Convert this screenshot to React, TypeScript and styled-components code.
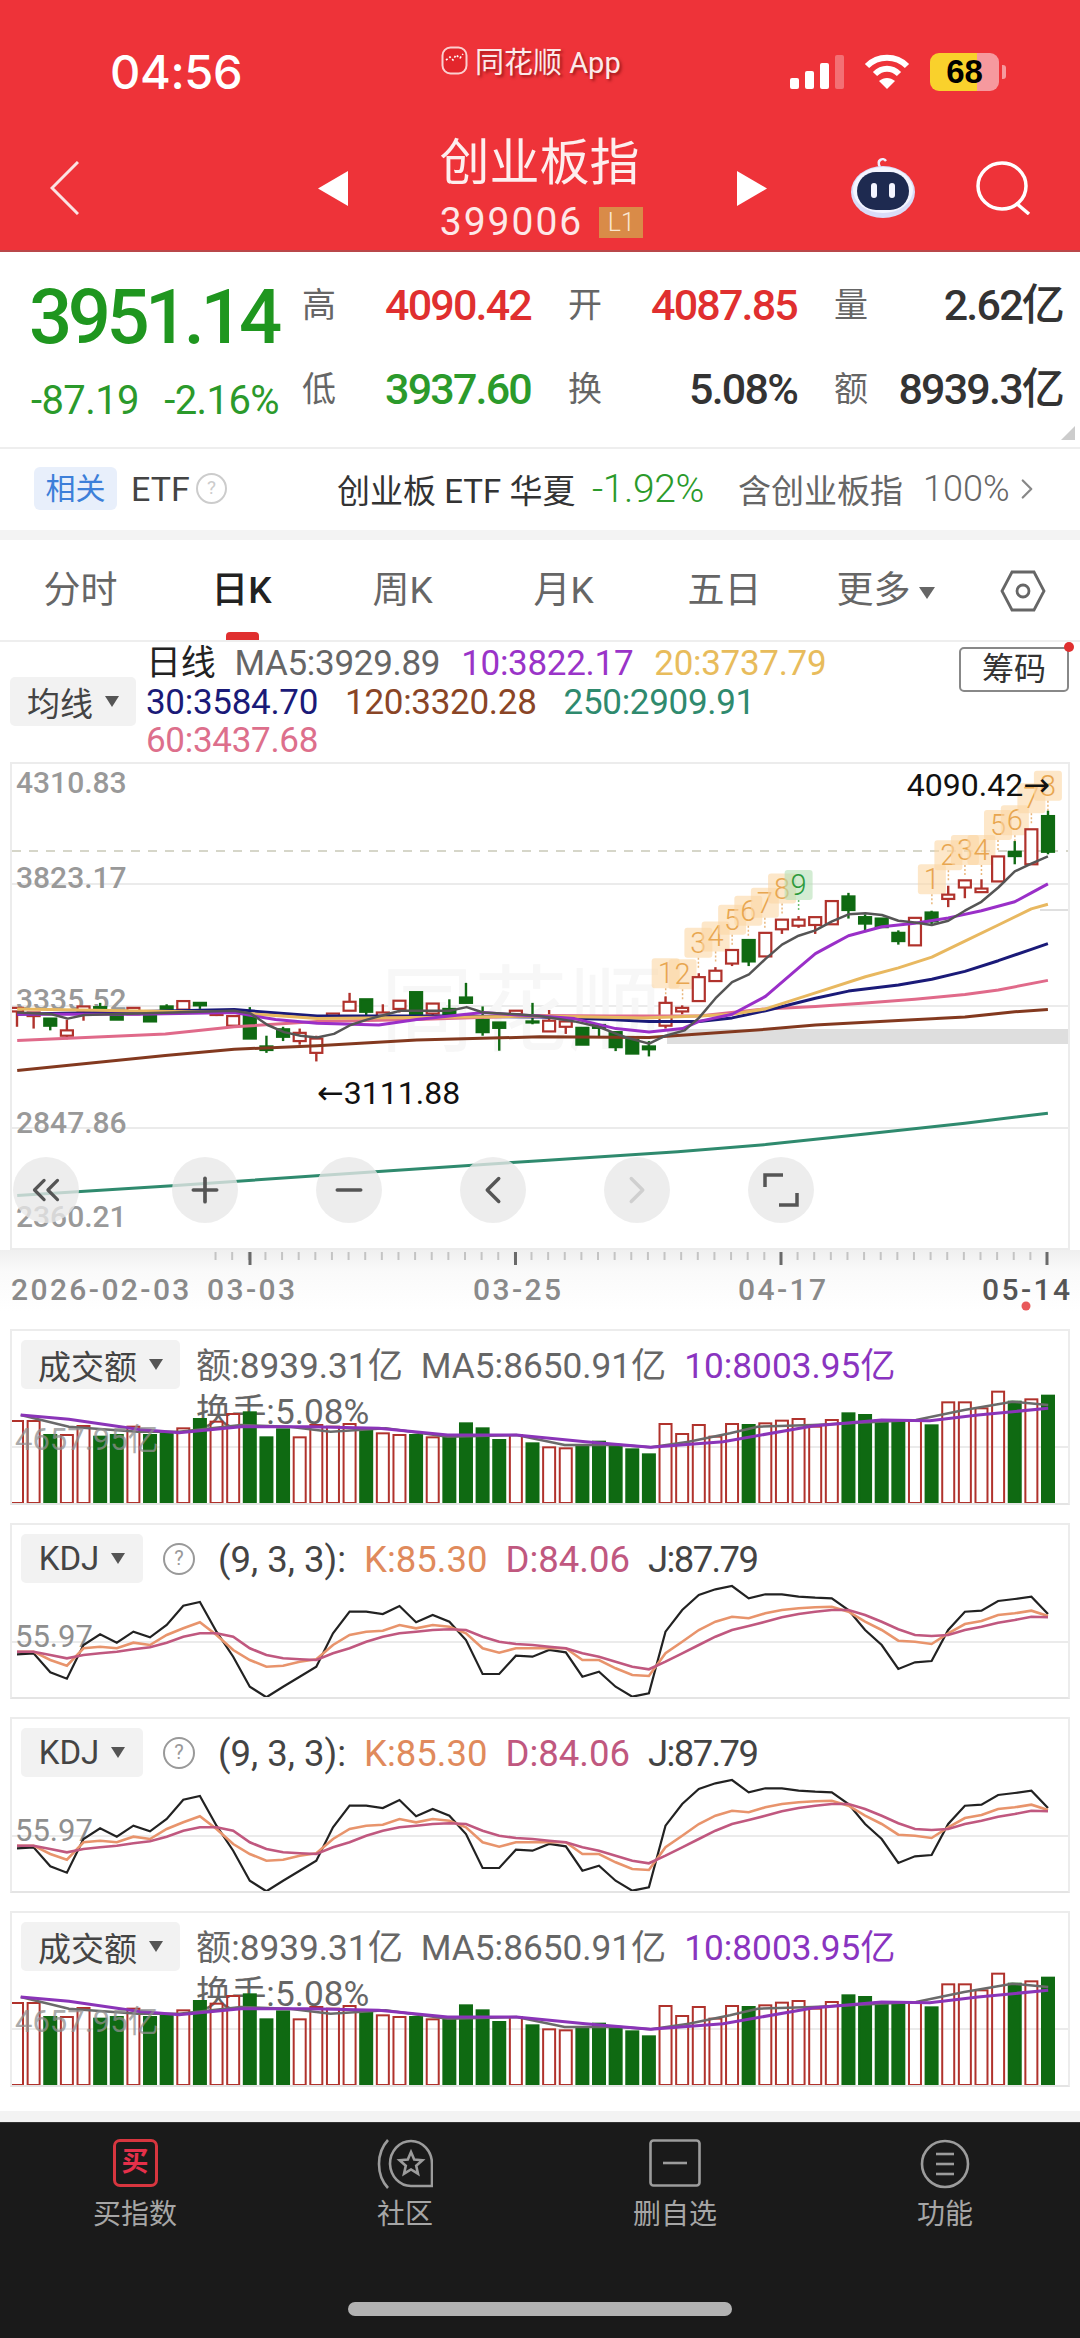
import React from 'react';
import styled, { createGlobalStyle } from 'styled-components';
import { ChevronLeft, ChevronRight, ChevronsLeft, Minus, Plus } from 'lucide-react';

const FONT = `Roboto, "Noto Sans CJK SC", sans-serif`;
const RED = '#e02f2f';
const GREEN = '#2b9a2b';
const BAR_RED = '#b0322c';
const BAR_GREEN = '#0f6a12';

const GlobalStyle = createGlobalStyle`
  html, body { margin: 0; padding: 0; background: #fff; }
  * { box-sizing: border-box; }
`;

const Page = styled.div`
  width: 1080px;
  height: 2338px;
  display: flex;
  flex-direction: column;
  overflow: hidden;
  background: #fff;
  font-family: ${FONT};
`;

/* ---------- red header ---------- */
const Header = styled.header`
  height: 252px;
  background: #ee3339;
  border-bottom: 2px solid #b9474a;
  color: #fff;
  flex: none;
`;

const StatusBar = styled.div`
  height: 118px;
  display: grid;
  grid-template-columns: 441px 349px 1fr;
  padding-top: 44px;
  align-items: start;
`;

const Clock = styled.div`
  padding-left: 110px;
  font: 500 47px/56px Inter, sans-serif;
  letter-spacing: -0.4px;
`;

const AppMark = styled.div`
  display: flex;
  align-items: center;
  gap: 7px;
  height: 32px;
  font-size: 29px;
  color: #fbeaea;
  text-shadow: 2px 2px 3px rgba(90, 0, 0, 0.55);
`;

const StatusIcons = styled.div`
  display: flex;
  align-items: center;
  height: 56px;
  gap: 20px;
`;

const Battery = styled.div<{ $level: number }>`
  width: 69px;
  height: 38px;
  border-radius: 9px;
  display: flex;
  align-items: center;
  justify-content: center;
  font: 700 33px/38px "Liberation Sans", sans-serif;
  color: #000;
  background: linear-gradient(90deg, #f9d12c ${p => p.$level}%, #f6999e ${p => p.$level}%);
  position: relative;
  &::after {
    content: '';
    position: absolute;
    right: -7px;
    top: 12px;
    width: 4px;
    height: 14px;
    border-radius: 0 3px 3px 0;
    background: #f6999e;
  }
`;

const NavRow = styled.div`
  display: flex;
  align-items: center;
  height: 132px;
  padding: 8px 0 0 50px;
`;

const BackButton = styled.div`
  width: 29px;
  margin-right: 239px;
  display: flex;
`;

const TitleBlock = styled.div`
  width: 389px;
  display: flex;
  flex-direction: column;
  align-items: center;
  padding-right: 2px;
`;

const Title = styled.div`
  font-size: 50px;
  line-height: 50px;
  font-weight: 400;
  color: #fdeeee;
  margin-right: 4px;
`;

const CodeRow = styled.div`
  display: flex;
  align-items: center;
  gap: 16px;
  margin-top: 18px;
  height: 32px;
`;

const Code = styled.span`
  font-size: 39px;
  font-weight: 400;
  letter-spacing: 2px;
  color: #fde8e8;
`;

const Level = styled.span`
  width: 44px;
  height: 31px;
  background: #d98b48;
  color: #fbe7d2;
  font-size: 25px;
  font-weight: 300;
  line-height: 31px;
  text-align: center;
`;

const RobotSlot = styled.div`
  margin-left: 83px;
  display: flex;
`;

const SearchSlot = styled.div`
  margin-left: 59px;
  display: flex;
`;

/* ---------- quote block ---------- */
const Quote = styled.section`
  height: 197px;
  flex: none;
  position: relative;
  border-bottom: 2px solid #eee;
  display: flex;
  padding: 23px 0 0 31px;
`;

const PriceCol = styled.div`
  width: 271px;
  flex: none;
`;

const Price = styled.div`
  font-size: 76px;
  font-weight: 500;
  line-height: 84px;
  letter-spacing: -4.5px;
  margin-left: -2px;
  color: #1f961f;
`;

const Change = styled.div`
  display: flex;
  justify-content: space-between;
  width: 248px;
  margin-top: 20px;
  font-size: 40px;
  line-height: 44px;
  letter-spacing: -0.6px;
  color: ${GREEN};
`;

const StatsGrid = styled.div`
  display: grid;
  grid-template-columns: repeat(3, 229px);
  grid-auto-rows: 44px;
  column-gap: 37px;
  row-gap: 40px;
  padding-top: 8px;
`;

const Stat = styled.div`
  display: flex;
  justify-content: space-between;
  align-items: center;
  height: 44px;
`;

const StatLabel = styled.span`
  font-size: 34px;
  line-height: 44px;
  color: #666;
`;

const StatValue = styled.span<{ $color: string }>`
  font-size: 43px;
  line-height: 44px;
  font-weight: 500;
  letter-spacing: -1.8px;
  color: ${p => p.$color};
`;

const Corner = styled.div`
  position: absolute;
  right: 5px;
  bottom: 7px;
  width: 0;
  height: 0;
  border-left: 14px solid transparent;
  border-bottom: 14px solid #ccc;
`;

/* ---------- related ETF row ---------- */
const RelatedRow = styled.div`
  height: 81px;
  flex: none;
  display: flex;
  align-items: center;
  padding: 0 0 2px 34px;
  font-size: 32px;
  color: #444;
`;

const RelatedBadge = styled.span`
  width: 83px;
  height: 43px;
  border-radius: 6px;
  background: #e8effb;
  color: #3d7fd9;
  font-size: 30px;
  line-height: 43px;
  text-align: center;
`;

const EtfLabel = styled.span`
  margin-left: 14px;
  font-size: 34px;
  width: 65px;
`;

const HelpDot = styled.span<{ $size: number; $color: string }>`
  width: ${p => p.$size}px;
  height: ${p => p.$size}px;
  flex: none;
  border-radius: 50%;
  border: 2.5px solid ${p => p.$color};
  color: ${p => p.$color};
  font-size: ${p => p.$size - 12}px;
  line-height: ${p => p.$size - 5}px;
  text-align: center;
`;

const FundName = styled.span`
  margin-left: 110px;
  width: 255px;
  font-size: 33px;
  color: #333;
`;

const FundChange = styled.span`
  width: 146px;
  font-size: 39px;
  font-weight: 300;
  letter-spacing: -0.4px;
  color: ${GREEN};
`;

const FundHold = styled.span`
  font-size: 33px;
  color: #666;
`;

const FundRatio = styled.span`
  margin-left: 20px;
  font-size: 36px;
  font-weight: 300;
  color: #666;
`;

const Band = styled.div<{ $h: number }>`
  height: ${p => p.$h}px;
  flex: none;
  background: #f3f3f3;
`;

/* ---------- period tabs ---------- */
const Tabs = styled.nav`
  height: 102px;
  flex: none;
  display: grid;
  grid-template-columns: repeat(6, 161px) 1fr;
  align-items: center;
  border-bottom: 2px solid #eee;
  padding-top: 2px;
  position: relative;
`;

const Tab = styled.div<{ $active?: boolean }>`
  text-align: center;
  font-size: 37px;
  line-height: 40px;
  font-weight: ${p => (p.$active ? 500 : 400)};
  color: ${p => (p.$active ? '#222' : '#666')};
  position: relative;
  &::after {
    content: '';
    display: ${p => (p.$active ? 'block' : 'none')};
    position: absolute;
    left: 65px;
    bottom: -29px;
    width: 33px;
    height: 8px;
    border-radius: 4px 4px 0 0;
    background: ${RED};
  }
`;

const MoreCaret = styled.span`
  display: inline-block;
  margin-left: 8px;
  vertical-align: middle;
  border-left: 8px solid transparent;
  border-right: 8px solid transparent;
  border-top: 12px solid #666;
`;

const SettingsSlot = styled.div`
  display: flex;
  justify-content: center;
`;

/* ---------- main chart head ---------- */
const ChartHead = styled.div`
  height: 120px;
  flex: none;
  display: flex;
  padding: 3px 11px 0 10px;
  position: relative;
`;

const SelectButton = styled.div<{ $w: number }>`
  width: ${p => p.$w}px;
  height: 49px;
  flex: none;
  border-radius: 5px;
  background: #f2f2f2;
  display: flex;
  align-items: center;
  justify-content: center;
  gap: 12px;
  font-size: 33px;
  color: #444;
  &::after {
    content: '';
    border-left: 7px solid transparent;
    border-right: 7px solid transparent;
    border-top: 11px solid #555;
  }
`;

const MaButton = styled(SelectButton)`
  margin-top: 32px;
`;

const MaLegend = styled.div`
  margin-left: 10px;
  display: flex;
  flex-direction: column;
`;

const LegendLine = styled.div<{ $gap: number }>`
  display: flex;
  gap: ${p => p.$gap}px;
  height: 38.5px;
  line-height: 38px;
  font-size: 35px;
  letter-spacing: -0.3px;
  white-space: nowrap;
`;

const LegendItem = styled.span<{ $color: string }>`
  color: ${p => p.$color};
`;

const DayLabel = styled.span`
  color: #222;
  margin-right: -2px;
`;

const ChipButton = styled.div`
  margin-left: auto;
  margin-top: 2px;
  width: 110px;
  height: 45px;
  border: 2px solid #888;
  border-radius: 5px;
  text-align: center;
  font-size: 32px;
  line-height: 40px;
  color: #333;
  position: relative;
  &::after {
    content: '';
    position: absolute;
    top: -7px;
    right: -7px;
    width: 10px;
    height: 10px;
    border-radius: 50%;
    background: ${RED};
  }
`;

/* ---------- main chart ---------- */
const ChartBox = styled.div`
  height: 488px;
  flex: none;
  margin: 0 10px;
  border: 2px solid #ececec;
  position: relative;
`;

const FullSvg = styled.svg`
  position: absolute;
  inset: 0;
  width: 100%;
  height: 100%;
  display: block;
`;

const ToolRow = styled.div`
  position: absolute;
  left: 1px;
  top: 393px;
  display: flex;
  gap: 78px;
`;

const ToolButton = styled.div<{ $first?: boolean; $off?: boolean }>`
  width: 66px;
  height: 66px;
  border-radius: 50%;
  background: rgba(232, 232, 232, 0.78);
  display: flex;
  align-items: center;
  justify-content: center;
  color: ${p => (p.$off ? '#cfcfcf' : '#555')};
  margin-right: ${p => (p.$first ? '15px' : '0')};
`;

const AxisLabel = styled.text`
  font: 500 30px Roboto, sans-serif;
  fill: #999;
`;

const PeakLabel = styled.text<{ $end?: boolean }>`
  font: 400 32px Roboto, "DejaVu Sans", sans-serif;
  fill: #111;
  text-anchor: ${p => (p.$end ? 'end' : 'start')};
`;

const Watermark = styled.text`
  font: 400 94px "Noto Sans CJK SC", sans-serif;
  fill: #f7f7f7;
`;

const SeqMark = styled.text<{ $hit?: boolean }>`
  font: 300 29px Roboto, sans-serif;
  fill: ${p => (p.$hit ? '#2c9a3c' : '#e8a650')};
  text-anchor: middle;
`;

const TimeAxis = styled.div`
  height: 61px;
  flex: none;
  position: relative;
  background: linear-gradient(180deg, #efefef 0, #fafafa 35%, #fff 100%);
`;

const DateLabel = styled.text<{ $strong?: boolean }>`
  font: 500 30px Roboto, sans-serif;
  letter-spacing: 2.4px;
  fill: ${p => (p.$strong ? '#555' : '#8a8a8a')};
`;

/* ---------- indicator panels ---------- */
const Panel = styled.section`
  height: 176px;
  flex: none;
  margin: 18px 10px 0;
  border: 2px solid #ececec;
  border-bottom-color: #e4e4e4;
  position: relative;
  padding: 9px 0 0 9px;
  display: flex;
  gap: 16px;
`;

const PanelLegend = styled.div`
  display: flex;
  flex-direction: column;
`;

const PanelLine = styled.div`
  display: flex;
  gap: 18px;
  height: 52px;
  padding-top: 5px;
  line-height: 42px;
  font-size: 35.2px;
  white-space: nowrap;
  color: #666;
  &:nth-child(2) {
    height: 42px;
    margin-top: -6px;
  }
`;

const KdjLegend = styled.div`
  display: flex;
  align-items: center;
  gap: 18px;
  height: 49px;
  margin-left: 7px;
  padding-top: 2px;
  font-size: 36.5px;
  color: #444;
  white-space: nowrap;
`;

const KdjJ = styled.span`
  letter-spacing: -1.6px;
`;

const HelpSlot = styled.div`
  margin-left: 4px;
  height: 49px;
  display: flex;
  align-items: center;
`;

const PanelAxis = styled.text`
  font: 400 31px Roboto, "Noto Sans CJK SC", sans-serif;
  fill: #8f8f8f;
`;

const Footer = styled.div`
  height: 24px;
  flex: none;
`;

/* ---------- bottom nav ---------- */
const BottomNav = styled.footer`
  flex: 1;
  background: #1a1a1a;
  display: flex;
  flex-direction: column;
  border-top: 1px solid #333;
`;

const NavGrid = styled.div`
  display: grid;
  grid-template-columns: repeat(4, 270px);
  padding-top: 16px;
`;

const NavItem = styled.div`
  display: flex;
  flex-direction: column;
  align-items: center;
  color: #a6a6a6;
  font-size: 28px;
  line-height: 30px;
`;

const NavIconSlot = styled.div`
  height: 48px;
  margin-bottom: 13px;
  display: flex;
  justify-content: center;
`;

const BuyIcon = styled.div`
  width: 45px;
  height: 48px;
  border: 3px solid #d8363f;
  border-radius: 7px;
  color: #e6304a;
  font-size: 27px;
  font-weight: 700;
  line-height: 41px;
  text-align: center;
`;

const HomeBar = styled.div`
  width: 384px;
  height: 14px;
  border-radius: 7px;
  background: #b2b2b2;
  margin: auto auto 22px;
`;

/* ---------- data, read off the chart: [kind, bodyTop, bodyBottom, wickTop, wickBottom] ---------- */
type Candle = ['r' | 'g', number, number, number?, number?];

const CANDLES: Candle[] = [
  ['r', 722, 732, 722, 775], ['r', 735, 745, 735, 780], ['g', 752, 772, 752, 785], ['r', 785, 800, 755, 810],
  ['r', 718, 730, 718, 758], ['g', 720, 730, 708, 730], ['g', 740, 755], ['r', 722, 740],
  ['g', 745, 760], ['g', 718, 730, 712, 730], ['r', 703, 727], ['g', 708, 715, 708, 725],
  ['r', 738, 742, 738, 745], ['r', 745, 772], ['g', 745, 808, 720, 808], ['g', 830, 840, 800, 848],
  ['g', 782, 803, 775, 815], ['r', 792, 815, 780, 825], ['r', 808, 848, 800, 872], ['r', 738, 748],
  ['r', 705, 730, 680, 730], ['g', 698, 733, 698, 745], ['r', 735, 745, 712, 745], ['r', 702, 725, 702, 735],
  ['g', 678, 742], ['r', 710, 738, 710, 745], ['g', 725, 740, 698, 740], ['g', 693, 708, 652, 708],
  ['g', 755, 790, 718, 800], ['g', 763, 778, 763, 842], ['r', 730, 740], ['g', 760, 763, 708, 768],
  ['r', 758, 788, 728, 788], ['r', 760, 775, 760, 795], ['g', 778, 825], ['g', 770, 778, 770, 805],
  ['g', 790, 832, 790, 843], ['g', 812, 850], ['g', 830, 838, 815, 858], ['r', 708, 772, 690, 780],
  ['r', 722, 732, 715, 740], ['r', 636, 703, 625, 703], ['r', 618, 647, 608, 647], ['r', 560, 598, 560, 605],
  ['g', 532, 592, 532, 605], ['r', 512, 578], ['r', 475, 502, 475, 515], ['r', 475, 492, 465, 498],
  ['r', 468, 490, 468, 515], ['r', 423, 488], ['g', 410, 448, 400, 472], ['g', 468, 486, 460, 510],
  ['g', 472, 496], ['g', 512, 535, 505, 545], ['r', 470, 547], ['g', 455, 480, 450, 490],
  ['r', 405, 417, 380, 440], ['r', 365, 385, 365, 415], ['r', 388, 398, 362, 398], ['r', 298, 368],
  ['g', 285, 297, 255, 320], ['r', 222, 320], ['g', 185, 285, 170, 292],
];

const STEP = (1048 - 17) / 62;
const xOf = (i: number) => 17 + i * STEP;
const yOf = (v: number) => 750 + v / 2.8;
// line points are [x, y] on the 2.9x crop of the chart
const toPoints = (line: number[][]) => line.map(([x, y]) => `${(x / 2.904).toFixed(1)},${yOf(y).toFixed(1)}`).join(' ');

const MA_LINES: { color: string; width: number; line: number[][] }[] = [
  { color: '#2f8a6e', width: 3, line: [[50, 1247], [500, 1220], [1100, 1180], [1568, 1150], [1968, 1125], [2223, 1105], [2513, 1075], [2802, 1045], [3043, 1017]] },
  { color: '#83391f', width: 3, line: [[50, 897], [480, 855], [680, 838], [921, 828], [1210, 812], [1568, 803], [1885, 805], [2030, 795], [2223, 782], [2368, 770], [2609, 757], [2802, 748], [2947, 733], [3043, 727]] },
  { color: '#e06a8a', width: 3, line: [[50, 813], [480, 795], [680, 775], [921, 760], [1210, 755], [1568, 743], [1768, 745], [2030, 745], [2223, 725], [2368, 718], [2513, 708], [2657, 698], [2802, 685], [2899, 672], [3043, 645]] },
  { color: '#1a1a78', width: 3, line: [[50, 740], [680, 727], [921, 745], [1306, 745], [1568, 748], [1768, 755], [1885, 760], [2030, 760], [2126, 750], [2223, 730], [2368, 695], [2464, 675], [2609, 658], [2706, 642], [2802, 620], [2899, 590], [2995, 558], [3043, 542]] },
  { color: '#e8b860', width: 3, line: [[50, 725], [680, 735], [921, 752], [1568, 745], [1868, 750], [2030, 745], [2126, 740], [2223, 725], [2368, 680], [2513, 635], [2609, 610], [2706, 580], [2802, 535], [2899, 490], [2995, 445], [3043, 432]] },
  { color: '#9a2fc8', width: 3, line: [[50, 740], [400, 740], [680, 735], [800, 755], [921, 765], [1100, 770], [1210, 755], [1306, 745], [1403, 735], [1500, 742], [1568, 745], [1668, 752], [1788, 780], [1885, 790], [1982, 780], [2030, 760], [2126, 740], [2223, 690], [2319, 610], [2368, 570], [2416, 545], [2464, 520], [2561, 495], [2657, 485], [2754, 470], [2850, 450], [2947, 425], [2995, 400], [3043, 375]] },
  { color: '#555', width: 2.5, line: [[50, 735], [150, 740], [197, 752], [245, 742], [680, 730], [728, 738], [777, 770], [825, 790], [873, 800], [921, 805], [970, 795], [1018, 770], [1066, 755], [1162, 730], [1306, 730], [1355, 720], [1403, 735], [1500, 740], [1568, 745], [1668, 760], [1738, 775], [1818, 805], [1885, 822], [1933, 800], [1988, 785], [2030, 750], [2078, 695], [2126, 650], [2175, 628], [2223, 585], [2271, 545], [2319, 520], [2368, 505], [2416, 480], [2464, 460], [2513, 457], [2561, 462], [2609, 478], [2657, 483], [2706, 490], [2754, 478], [2802, 450], [2850, 425], [2899, 385], [2947, 340], [2995, 318], [3043, 298]] },
];

const MARKS: [string, number, number][] = [
  ['1', 365, 625], ['2', 414, 628], ['3', 460, 540], ['4', 510, 522], ['5', 558, 475], ['6', 605, 450], ['7', 653, 428], ['8', 703, 388], ['9', 751, 378],
  ['1', 1138, 362], ['2', 1186, 295], ['3', 1234, 280], ['4', 1282, 280], ['5', 1330, 210], ['6', 1379, 197], ['7', 1427, 135], ['8', 1475, 100],
];

const VOLUME: ['r' | 'g', number][] = [
  ['r', 303], ['r', 303], ['g', 345], ['r', 345], ['r', 318], ['g', 350], ['g', 345], ['r', 320], ['g', 345], ['g', 340],
  ['r', 325], ['g', 297], ['r', 305], ['r', 282], ['g', 277], ['g', 352], ['g', 328], ['r', 352], ['r', 315], ['r', 320],
  ['r', 312], ['g', 325], ['r', 340], ['r', 345], ['g', 345], ['r', 352], ['g', 348], ['g', 310], ['g', 325], ['g', 360],
  ['r', 345], ['g', 370], ['r', 382], ['r', 385], ['g', 375], ['g', 365], ['g', 380], ['g', 388], ['g', 403], ['r', 312],
  ['r', 342], ['r', 315], ['r', 350], ['r', 312], ['g', 315], ['r', 310], ['r', 302], ['r', 297], ['r', 320], ['r', 300],
  ['g', 280], ['g', 285], ['g', 300], ['g', 300], ['r', 300], ['g', 316], ['r', 247], ['r', 247], ['r', 265], ['r', 215],
  ['g', 245], ['r', 238], ['g', 227],
];

const VOL_MA5 = [[30, 285], [100, 320], [200, 335], [260, 335], [350, 315], [420, 320], [480, 335], [560, 325], [650, 350], [750, 345], [820, 375], [900, 375], [945, 382], [1000, 365], [1060, 340], [1100, 320], [1180, 315], [1330, 300], [1400, 270], [1470, 245], [1522, 255]];
const VOL_MA10 = [[30, 285], [100, 298], [200, 328], [260, 338], [350, 320], [450, 320], [550, 325], [650, 345], [750, 345], [850, 365], [945, 382], [1050, 365], [1180, 318], [1280, 300], [1350, 302], [1420, 285], [1522, 265]];

const J_LINE = [1003, 1000, 1057, 1076, 975, 943, 968, 935, 952, 915, 857, 846, 935, 1010, 1100, 1132, 1100, 1070, 1040, 940, 875, 875, 882, 858, 907, 885, 905, 960, 1062, 1062, 1007, 1010, 990, 997, 1070, 1055, 1100, 1130, 1120, 935, 870, 825, 808, 798, 835, 823, 823, 830, 833, 835, 870, 930, 975, 1047, 1027, 1023, 930, 875, 872, 843, 837, 830, 882];
const K_LINE = [995, 995, 1020, 1037, 985, 980, 985, 968, 975, 945, 925, 907, 945, 990, 1020, 1040, 1037, 1025, 1018, 975, 945, 935, 932, 915, 925, 915, 920, 940, 985, 998, 985, 985, 985, 985, 1020, 1020, 1045, 1065, 1068, 1000, 965, 930, 905, 890, 895, 880, 870, 865, 862, 860, 875, 905, 930, 962, 965, 972, 940, 912, 903, 885, 880, 872, 888];
const D_LINE = [995, 995, 1005, 1015, 1005, 1000, 995, 988, 982, 968, 950, 940, 940, 950, 985, 1005, 1015, 1018, 1020, 1000, 985, 965, 950, 940, 935, 930, 928, 930, 950, 965, 972, 975, 980, 985, 1000, 1010, 1025, 1040, 1048, 1025, 1000, 975, 950, 930, 918, 905, 892, 882, 875, 870, 870, 885, 905, 928, 945, 948, 945, 930, 920, 908, 900, 890, 892];

/* ---------- small drawings ---------- */
const LogoIcon = () => (
  <svg width="27" height="29" viewBox="0 0 27 29">
    <rect x="1.5" y="1.5" width="24" height="26" rx="8" fill="#e3262c" stroke="#fbd0d0" strokeWidth="2" />
    <polyline points="5,14 9,11 12,14 15,9 19,12 22,8" fill="none" stroke="#fff" strokeWidth="1.6" strokeDasharray="2 2" />
  </svg>
);

const SignalIcon = () => (
  <svg width="54" height="34" viewBox="0 0 54 34">
    <rect x="0" y="23" width="9" height="11" rx="2" fill="#fff" />
    <rect x="15" y="16" width="9" height="18" rx="2" fill="#fff" />
    <rect x="30" y="8" width="9" height="26" rx="2" fill="#fff" />
    <rect x="45" y="0" width="9" height="34" rx="2" fill="#fff" fillOpacity="0.3" />
  </svg>
);

const WifiIcon = () => (
  <svg width="46" height="36" viewBox="0 0 46 36" fill="none" stroke="#fff" strokeWidth="6">
    <path d="M3 12 C14 1 32 1 43 12" />
    <path d="M11 20 C18 13 28 13 35 20" />
    <path d="M23 35 L15 27 C20 23 26 23 31 27 Z" fill="#fff" stroke="none" />
  </svg>
);

const BackIcon = () => (
  <svg width="29" height="54" viewBox="0 0 29 54" fill="none" stroke="#fbe3e3" strokeWidth="3">
    <polyline points="28,1 2,27 28,53" />
  </svg>
);

const Arrow = ({ dir }: { dir: 'l' | 'r' }) => (
  <svg width="30" height="35" viewBox="0 0 30 35">
    <polygon points={dir === 'l' ? '30,0 30,35 0,17.5' : '0,0 0,35 30,17.5'} fill="#fff" />
  </svg>
);

const RobotIcon = () => (
  <svg width="66" height="62" viewBox="0 0 66 62">
    <path d="M30 10 C26 3 33 0 36 4" fill="none" stroke="#eef0ff" strokeWidth="2.5" />
    <ellipse cx="33" cy="35" rx="32" ry="26" fill="#d9dcf8" />
    <ellipse cx="33" cy="33" rx="30" ry="23" fill="#f4f5ff" />
    <rect x="7" y="15" width="52" height="38" rx="19" fill="#1e2a50" />
    <rect x="21" y="26" width="6" height="15" rx="3" fill="#f4f5ff" />
    <rect x="39" y="26" width="6" height="15" rx="3" fill="#f4f5ff" />
  </svg>
);

const SearchIcon = () => (
  <svg width="56" height="54" viewBox="0 0 56 54" fill="none" stroke="#fff" strokeWidth="3.5">
    <ellipse cx="27" cy="25" rx="24" ry="23" />
    <line x1="41" y1="42" x2="54" y2="53" />
  </svg>
);

const HexIcon = () => (
  <svg width="46" height="42" viewBox="0 0 46 42" fill="none" stroke="#666" strokeWidth="2.8">
    <polygon points="12,2 34,2 44,21 34,40 12,40 2,21" />
    <circle cx="23" cy="21" r="6" />
  </svg>
);

const FullscreenIcon = () => (
  <svg width="36" height="34" viewBox="0 0 36 34" fill="none" stroke="#555" strokeWidth="3.5">
    <polyline points="2,14 2,2 20,2" />
    <polyline points="34,20 34,32 16,32" />
  </svg>
);

const CommunityIcon = () => (
  <svg width="56" height="50" viewBox="0 0 56 50" fill="none" stroke="#9c9c9c" strokeWidth="2.6">
    <path d="M11 1 C-1 14 -1 36 11 49" />
    <path d="M13 25 a21 23 0 0 1 42 0 v22 h-21 a21 23 0 0 1 -21 -22 z" />
    <polygon points="34,13 37.2,20.5 45.4,21.3 39.2,26.7 41,34.7 34,30.5 27,34.7 28.8,26.7 22.6,21.3 30.8,20.5" />
  </svg>
);

const WatchlistIcon = () => (
  <svg width="52" height="48" viewBox="0 0 52 48" fill="none" stroke="#9c9c9c" strokeWidth="2.6">
    <rect x="1.5" y="1.5" width="49" height="45" rx="3" />
    <line x1="14" y1="24" x2="38" y2="24" />
  </svg>
);

const MenuIcon = () => (
  <svg width="50" height="50" viewBox="0 0 50 50" fill="none" stroke="#9c9c9c" strokeWidth="2.6">
    <circle cx="25" cy="25" r="23" />
    <line x1="16" y1="15" x2="34" y2="15" />
    <line x1="16" y1="25" x2="34" y2="25" />
    <line x1="16" y1="35" x2="34" y2="35" />
  </svg>
);

/* ---------- charts ---------- */
const MainChart = () => (
  <FullSvg viewBox="12 764 1056 484">
    <line x1="12" x2="1068" y1="884" y2="884" stroke="#e4e4e4" strokeWidth="1.5" />
    <line x1="12" x2="1068" y1="1006" y2="1006" stroke="#e4e4e4" strokeWidth="1.5" />
    <line x1="12" x2="1068" y1="1128" y2="1128" stroke="#e4e4e4" strokeWidth="1.5" />
    <line x1="1040" x2="1068" y1="910" y2="910" stroke="#d5d5d5" strokeWidth="1.5" />
    <rect x="667" y="1029" width="401" height="15" fill="#dedede" />
    <line x1="12" x2="1068" y1="851" y2="851" stroke="#c9c9b8" strokeWidth="1.5" strokeDasharray="9 8" />
    <Watermark x="380" y="1044">同花顺</Watermark>
    <AxisLabel x="16" y="793">4310.83</AxisLabel>
    <AxisLabel x="16" y="888">3823.17</AxisLabel>
    <AxisLabel x="16" y="1010">3335.52</AxisLabel>
    <AxisLabel x="16" y="1133">2847.86</AxisLabel>
    <AxisLabel x="16" y="1227">2360.21</AxisLabel>
    {MARKS.map(([num, px, py], i) => {
      const cx = 540 + px / 2.904;
      const cy = yOf(py);
      const hit = num === '9';
      return (
        <g key={i}>
          <rect x={cx - 14} y={cy - 15} width="28" height="30" rx="3" fill={hit ? '#b5dfb5' : '#fbd7a5'} fillOpacity="0.6" />
          <line x1={cx} x2={cx} y1={cy + 15} y2={cy + 25} stroke={hit ? '#6fbf6f' : '#e9b77c'} strokeWidth="1.5" strokeDasharray="2 2" />
          <SeqMark x={cx} y={cy + 10} $hit={hit}>{num}</SeqMark>
        </g>
      );
    })}
    {CANDLES.map(([kind, top, bottom, hi, lo], i) => {
      const x = xOf(i);
      const color = kind === 'r' ? BAR_RED : BAR_GREEN;
      return (
        <g key={i}>
          <line x1={x} x2={x} y1={yOf(hi ?? top)} y2={yOf(lo ?? bottom)} stroke={color} strokeWidth="2.4" />
          <rect
            x={x - 6}
            y={yOf(top)}
            width="12"
            height={yOf(bottom) - yOf(top)}
            fill={kind === 'r' ? '#fff' : color}
            stroke={color}
            strokeWidth="2.2"
          />
        </g>
      );
    })}
    {MA_LINES.map(ma => (
      <polyline key={ma.color} points={toPoints(ma.line)} fill="none" stroke={ma.color} strokeWidth={ma.width} strokeLinejoin="round" />
    ))}
    <PeakLabel x="317" y="1104">←3111.88</PeakLabel>
    <PeakLabel x="1050" y="796" $end>4090.42→</PeakLabel>
  </FullSvg>
);

const TICKS = Array.from({ length: 51 }, (_, i) => 1047 - i * STEP);
const MAJOR = [250, 515.5, 781, 1047];

const AxisDrawing = () => (
  <FullSvg viewBox="0 1250 1080 61">
    {TICKS.map((x, i) => (
      <line key={i} x1={x} x2={x} y1="1252" y2="1260" stroke="#c4c4c4" strokeWidth="2" />
    ))}
    {MAJOR.map(x => (
      <line key={x} x1={x} x2={x} y1="1252" y2="1265" stroke="#6a6a6a" strokeWidth="3" />
    ))}
    <DateLabel x="11" y="1300">2026-02-03</DateLabel>
    <DateLabel x="207" y="1300">03-03</DateLabel>
    <DateLabel x="473" y="1300">03-25</DateLabel>
    <DateLabel x="738" y="1300">04-17</DateLabel>
    <DateLabel x="982" y="1300" $strong>05-14</DateLabel>
    <circle cx="1026" cy="1306" r="4.5" fill="#e8585a" />
  </FullSvg>
);

// crop scale on this panel is 1.452 across, 3 down
const volPoints = (line: number[][]) => line.map(([x, y]) => `${(x / 1.452).toFixed(1)},${(1320 + y / 3).toFixed(1)}`).join(' ');

const VolumeDrawing = () => (
  <FullSvg viewBox="12 1331 1056 172">
    <line x1="12" x2="1068" y1="1447" y2="1447" stroke="#e4e4e4" strokeWidth="1.5" />
    {VOLUME.map(([kind, top], i) => {
      const y = 1320 + top / 3;
      const color = kind === 'r' ? BAR_RED : BAR_GREEN;
      return (
        <rect
          key={i}
          x={xOf(i) - 6}
          y={y}
          width="12"
          height={1503 - y}
          fill={kind === 'r' ? 'none' : color}
          stroke={color}
          strokeWidth="2"
        />
      );
    })}
    <polyline points={volPoints(VOL_MA5)} fill="none" stroke="#6a6a6a" strokeWidth="2.5" />
    <polyline points={volPoints(VOL_MA10)} fill="none" stroke="#8a34b8" strokeWidth="3" />
    <PanelAxis x="15" y="1450" opacity="0.75">4657.95亿</PanelAxis>
  </FullSvg>
);

const kdjPoints = (vals: number[]) => vals.map((v, i) => `${xOf(i).toFixed(1)},${(1320 + v / 3).toFixed(1)}`).join(' ');

const KdjDrawing = () => (
  <FullSvg viewBox="12 1525 1056 172">
    <line x1="12" x2="1068" y1="1642" y2="1642" stroke="#e4e4e4" strokeWidth="1.5" />
    <PanelAxis x="15" y="1647">55.97</PanelAxis>
    <polyline points={kdjPoints(J_LINE)} fill="none" stroke="#222" strokeWidth="2.2" />
    <polyline points={kdjPoints(K_LINE)} fill="none" stroke="#e8946c" strokeWidth="2.6" />
    <polyline points={kdjPoints(D_LINE)} fill="none" stroke="#c0587f" strokeWidth="2.6" />
  </FullSvg>
);

const VolumePanel = () => (
  <Panel>
    <VolumeDrawing />
    <SelectButton $w={159}>成交额</SelectButton>
    <PanelLegend>
      <PanelLine>
        <span>额:8939.31亿</span>
        <span>MA5:8650.91亿</span>
        <LegendItem $color="#8a34c0">10:8003.95亿</LegendItem>
      </PanelLine>
      <PanelLine>换手:5.08%</PanelLine>
    </PanelLegend>
  </Panel>
);

const KdjPanel = () => (
  <Panel>
    <KdjDrawing />
    <SelectButton $w={122}>KDJ</SelectButton>
    <HelpSlot>
      <HelpDot $size={32} $color="#999">?</HelpDot>
    </HelpSlot>
    <KdjLegend>
      <span>(9, 3, 3):</span>
      <LegendItem $color="#e08a5c">K:85.30</LegendItem>
      <LegendItem $color="#c0587f">D:84.06</LegendItem>
      <KdjJ>J:87.79</KdjJ>
    </KdjLegend>
  </Panel>
);

const App: React.FC = () => (
  <Page>
    <GlobalStyle />
    <Header>
      <StatusBar>
        <Clock>04:56</Clock>
        <AppMark>
          <LogoIcon />
          同花顺 App
        </AppMark>
        <StatusIcons>
          <SignalIcon />
          <WifiIcon />
          <Battery $level={68}>68</Battery>
        </StatusIcons>
      </StatusBar>
      <NavRow>
        <BackButton><BackIcon /></BackButton>
        <Arrow dir="l" />
        <TitleBlock>
          <Title>创业板指</Title>
          <CodeRow>
            <Code>399006</Code>
            <Level>L1</Level>
          </CodeRow>
        </TitleBlock>
        <Arrow dir="r" />
        <RobotSlot><RobotIcon /></RobotSlot>
        <SearchSlot><SearchIcon /></SearchSlot>
      </NavRow>
    </Header>

    <Quote>
      <PriceCol>
        <Price>3951.14</Price>
        <Change>
          <span>-87.19</span>
          <span>-2.16%</span>
        </Change>
      </PriceCol>
      <StatsGrid>
        <Stat><StatLabel>高</StatLabel><StatValue $color={RED}>4090.42</StatValue></Stat>
        <Stat><StatLabel>开</StatLabel><StatValue $color={RED}>4087.85</StatValue></Stat>
        <Stat><StatLabel>量</StatLabel><StatValue $color="#333">2.62亿</StatValue></Stat>
        <Stat><StatLabel>低</StatLabel><StatValue $color={GREEN}>3937.60</StatValue></Stat>
        <Stat><StatLabel>换</StatLabel><StatValue $color="#333">5.08%</StatValue></Stat>
        <Stat><StatLabel>额</StatLabel><StatValue $color="#333">8939.3亿</StatValue></Stat>
      </StatsGrid>
      <Corner />
    </Quote>

    <RelatedRow>
      <RelatedBadge>相关</RelatedBadge>
      <EtfLabel>ETF</EtfLabel>
      <HelpDot $size={31} $color="#ccc">?</HelpDot>
      <FundName>创业板 ETF 华夏</FundName>
      <FundChange>-1.92%</FundChange>
      <FundHold>含创业板指</FundHold>
      <FundRatio>100%</FundRatio>
      <ChevronRight size={34} color="#888" strokeWidth={1.6} />
    </RelatedRow>
    <Band $h={10} />

    <Tabs>
      <Tab>分时</Tab>
      <Tab $active>日K</Tab>
      <Tab>周K</Tab>
      <Tab>月K</Tab>
      <Tab>五日</Tab>
      <Tab>更多<MoreCaret /></Tab>
      <SettingsSlot><HexIcon /></SettingsSlot>
    </Tabs>

    <ChartHead>
      <MaButton $w={126}>均线</MaButton>
      <MaLegend>
        <LegendLine $gap={21}>
          <DayLabel>日线</DayLabel>
          <LegendItem $color="#666">MA5:3929.89</LegendItem>
          <LegendItem $color="#9a34c8">10:3822.17</LegendItem>
          <LegendItem $color="#e8bc5c">20:3737.79</LegendItem>
        </LegendLine>
        <LegendLine $gap={27}>
          <LegendItem $color="#1a1a78">30:3584.70</LegendItem>
          <LegendItem $color="#8a4526">120:3320.28</LegendItem>
          <LegendItem $color="#2f8a6e">250:2909.91</LegendItem>
        </LegendLine>
        <LegendLine $gap={21}>
          <LegendItem $color="#dd6f8c">60:3437.68</LegendItem>
        </LegendLine>
      </MaLegend>
      <ChipButton>筹码</ChipButton>
    </ChartHead>

    <ChartBox>
      <MainChart />
      <ToolRow>
        <ToolButton $first><ChevronsLeft size={46} strokeWidth={1.7} /></ToolButton>
        <ToolButton><Plus size={40} strokeWidth={2.2} /></ToolButton>
        <ToolButton><Minus size={40} strokeWidth={2.2} /></ToolButton>
        <ToolButton><ChevronLeft size={46} strokeWidth={1.8} /></ToolButton>
        <ToolButton $off><ChevronRight size={46} strokeWidth={1.8} /></ToolButton>
        <ToolButton><FullscreenIcon /></ToolButton>
      </ToolRow>
    </ChartBox>
    <TimeAxis><AxisDrawing /></TimeAxis>

    <VolumePanel />
    <KdjPanel />
    <KdjPanel />
    <VolumePanel />
    <Footer />
    <Band $h={11} />

    <BottomNav>
      <NavGrid>
        <NavItem>
          <NavIconSlot><BuyIcon>买</BuyIcon></NavIconSlot>
          买指数
        </NavItem>
        <NavItem>
          <NavIconSlot><CommunityIcon /></NavIconSlot>
          社区
        </NavItem>
        <NavItem>
          <NavIconSlot><WatchlistIcon /></NavIconSlot>
          删自选
        </NavItem>
        <NavItem>
          <NavIconSlot><MenuIcon /></NavIconSlot>
          功能
        </NavItem>
      </NavGrid>
      <HomeBar />
    </BottomNav>
  </Page>
);

export default App;
